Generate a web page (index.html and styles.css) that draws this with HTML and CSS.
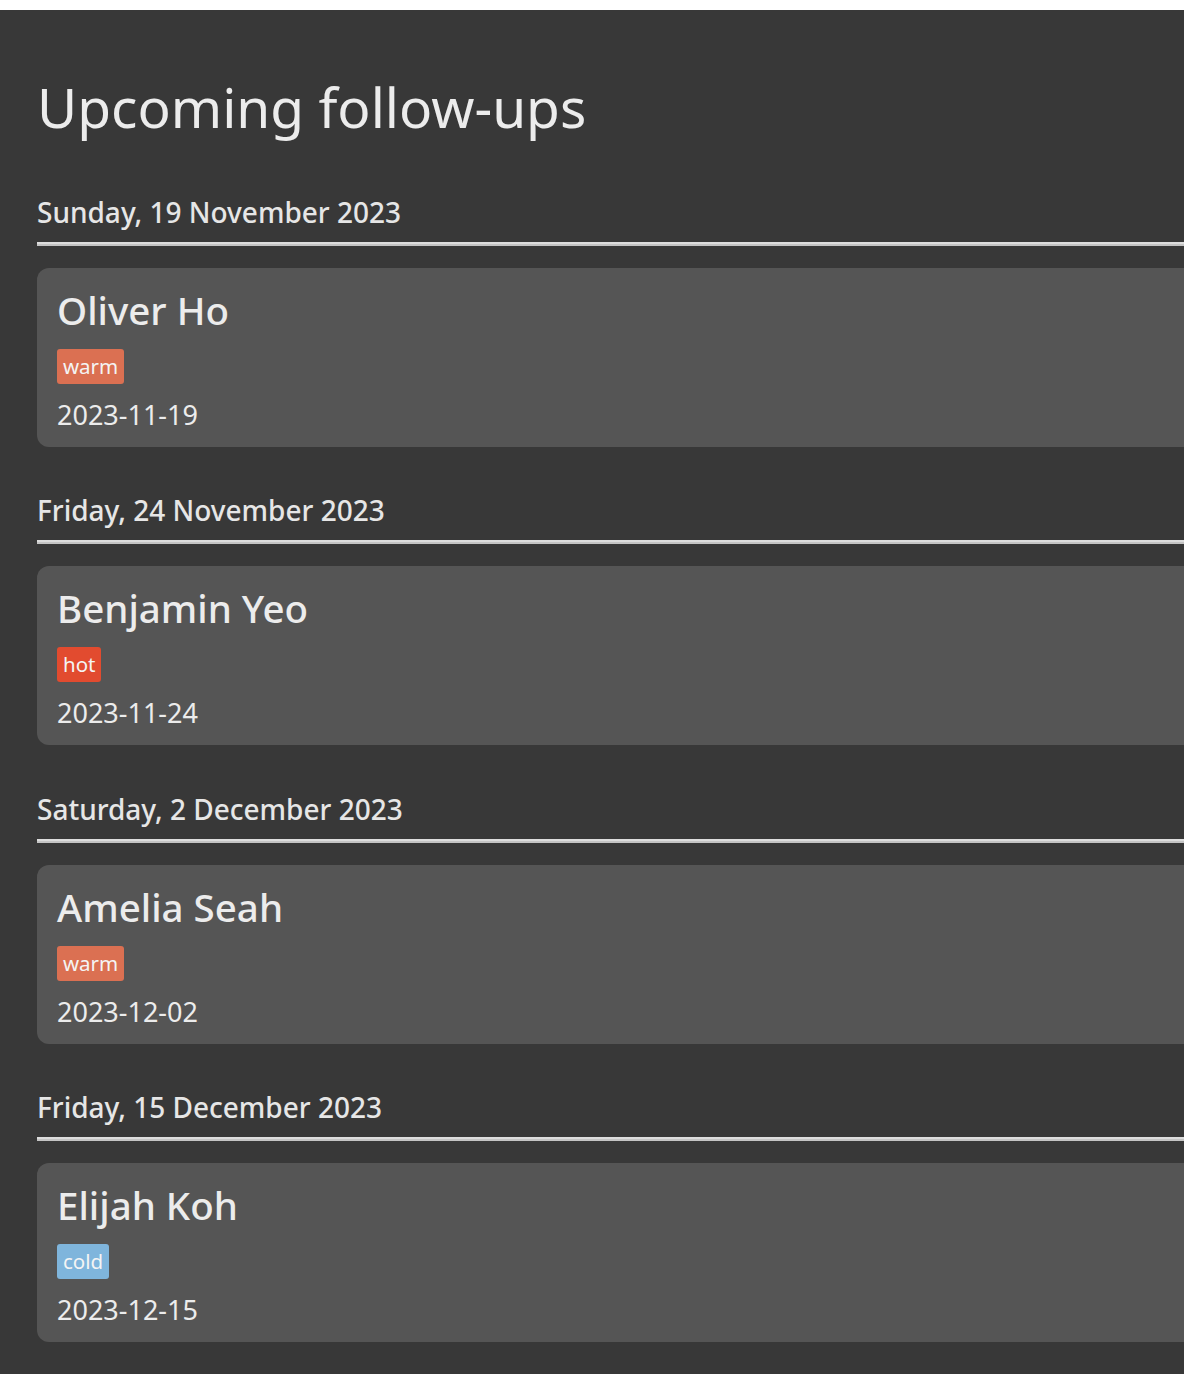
FILE: index.html
```html
<!DOCTYPE html>
<html lang="en">
<head>
<meta charset="utf-8">
<title>Upcoming follow-ups</title>
<link rel="stylesheet" href="styles.css">
</head>
<body>
<main class="page">
  <h1 class="title">Upcoming follow-ups</h1>
  <div class="groups">
    <section class="group">
      <h2 class="day">Sunday, 19 November 2023</h2>
      <article class="card">
        <h3 class="name">Oliver Ho</h3>
        <span class="tag tag-warm">warm</span>
        <div class="date">2023-11-19</div>
      </article>
    </section>
    <section class="group">
      <h2 class="day">Friday, 24 November 2023</h2>
      <article class="card">
        <h3 class="name">Benjamin Yeo</h3>
        <span class="tag tag-hot">hot</span>
        <div class="date">2023-11-24</div>
      </article>
    </section>
    <section class="group">
      <h2 class="day">Saturday, 2 December 2023</h2>
      <article class="card">
        <h3 class="name">Amelia Seah</h3>
        <span class="tag tag-warm">warm</span>
        <div class="date">2023-12-02</div>
      </article>
    </section>
    <section class="group">
      <h2 class="day">Friday, 15 December 2023</h2>
      <article class="card">
        <h3 class="name">Elijah Koh</h3>
        <span class="tag tag-cold">cold</span>
        <div class="date">2023-12-15</div>
      </article>
    </section>
  </div>
</main>
</body>
</html>
```

FILE: styles.css
```css
html, body {
  margin: 0;
  padding: 0;
  background: #ffffff;
}

body {
  padding-top: 10px;
  font-family: "Noto Sans", "Open Sans", sans-serif;
  color: #ececec;
}

.page {
  background: #383838;
  min-height: 1364px;
  padding: 67px 0 40px 37px;
  box-sizing: border-box;
  overflow: hidden;
}

.title {
  margin: 0;
  font-size: 55px;
  line-height: 60px;
  font-weight: 400;
  color: #ececec;
}

.groups {
  margin-right: -40px;
  display: flex;
  flex-direction: column;
  gap: 47.3px;
  margin-top: 59px;
}

.day {
  margin: 0;
  font-size: 28px;
  line-height: 32px;
  font-weight: 500;
  color: #e6e6e6;
  padding-bottom: 14px;
  border-bottom: 2px solid #dddddd;
  box-shadow: 0 2px 0 #c4c4c4;
}

.card {
  margin-top: 24px;
  background: #555555;
  border-radius: 12px;
  padding: 19px 20px 16px;
  display: flex;
  flex-direction: column;
  align-items: flex-start;
}

.name {
  margin: 0;
  font-size: 38.5px;
  line-height: 46px;
  font-weight: 500;
  color: #ececec;
}

.tag {
  margin-top: 16px;
  height: 35px;
  line-height: 35px;
  padding: 0 6px;
  border-radius: 3px;
  font-size: 20.5px;
  color: #f4f4f4;
  box-sizing: border-box;
}

.tag-warm { background: #db7052; }
.tag-hot { background: #e24b2f; }
.tag-cold { background: #7fb5dc; }

.date {
  margin-top: 15px;
  font-size: 27px;
  line-height: 32px;
  color: #ececec;
}
```
